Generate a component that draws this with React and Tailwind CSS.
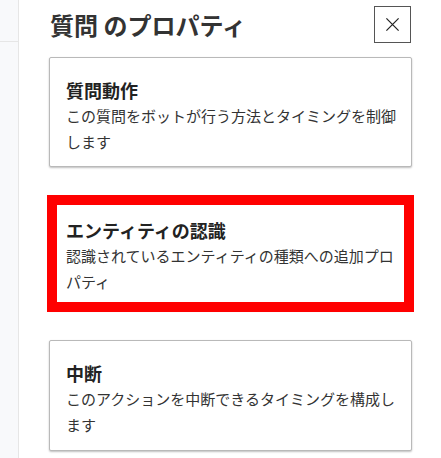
import React from "react";

function Card({ title, desc, extra = "" }) {
  return (
    <div className={`rounded-[2px] border border-[#b9b9b9] bg-white pl-4 pr-[12px] pt-[20px] shadow-[0_1px_2px_rgba(0,0,0,0.25)] ${extra}`}>
      <div className="text-[18px] font-bold leading-[24px] text-[#222]">{title}</div>
      <div className="mt-px text-[15px] leading-[26px] text-[#333]">{desc}</div>
    </div>
  );
}

export default function App() {
  return (
    <div className="flex h-[458px] w-[441px] overflow-hidden bg-white font-['Noto_Sans_CJK_JP','Noto_Sans',sans-serif]">
      <div className="w-[19px] shrink-0 border-r border-[#e6e6e6] bg-[#f8f9fb]">
        <div className="h-[42px] border-b border-[#e6e6e6]" />
      </div>
      <div className="flex-1 pl-[30px] pr-[29px]">
        <div className="mt-[6px] flex h-[37px] items-center justify-between">
          <h1 className="ml-px text-[24px] font-bold leading-none text-[#333]">質問 のプロパティ</h1>
          <button className="mr-px flex h-[37px] w-[37px] items-center justify-center border border-[#555] bg-white">
            <svg width="15" height="15" viewBox="0 0 16 16" fill="none" stroke="#222" strokeWidth="1.3">
              <path d="M1.5 1.5L14.5 14.5M14.5 1.5L1.5 14.5" />
            </svg>
          </button>
        </div>
        <div className="mt-[14px] flex flex-col gap-[30px]">
          <Card title="質問動作" desc="この質問をボットが行う方法とタイミングを制御します" extra="h-[110px]" />
          <div className="relative">
            <Card title="エンティティの認識" desc="認識されているエンティティの種類への追加プロパティ" extra="h-[113px]" />
            <div className="absolute -inset-[2px] border-[10px] border-[#ff0000]" />
          </div>
          <Card title="中断" desc="このアクションを中断できるタイミングを構成します" extra="h-[111px]" />
        </div>
      </div>
    </div>
  );
}
